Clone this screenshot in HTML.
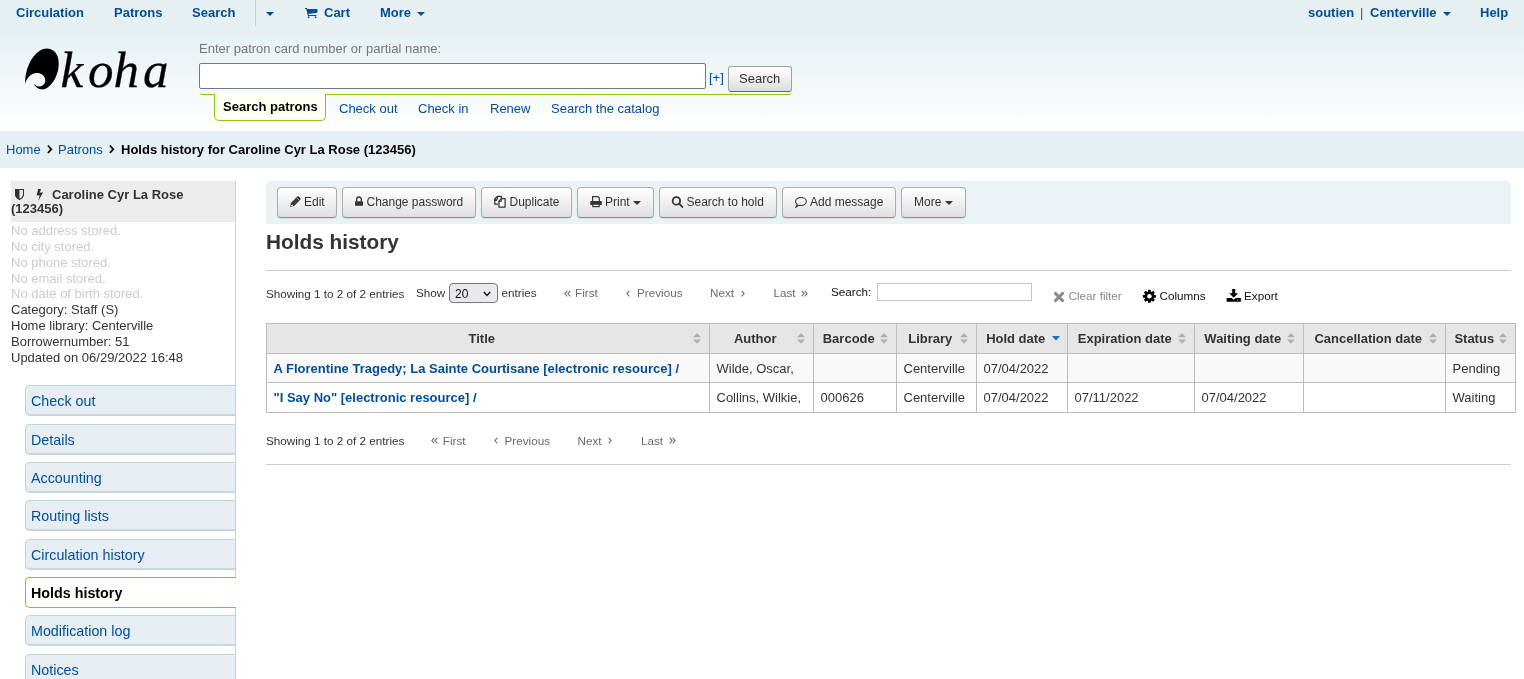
<!DOCTYPE html>
<html><head><meta charset="utf-8">
<style>
*{box-sizing:border-box;margin:0;padding:0}
html,body{width:1524px;height:679px;overflow:hidden;background:#fff}
body{font-family:"Liberation Sans",sans-serif;font-size:13px;color:#333;position:relative;will-change:transform}
.a{position:absolute;white-space:nowrap}
.lnk{color:#004d99}
#nav{position:absolute;left:0;top:0;width:1524px;height:31px;background:#e6f0f2}
#hdr{position:absolute;left:0;top:31px;width:1524px;height:100px;background:linear-gradient(to bottom,#e6f0f2 0%,#ffffff 100%)}
#bc{position:absolute;left:0;top:131px;width:1524px;height:37px;background:#e6f0f2}
.nb{font-weight:bold;color:#004d99;font-size:13px}
.btn{position:absolute;top:187px;height:31px;border:1px solid #adadad;border-bottom-color:#8c8c8c;border-radius:4px;background:linear-gradient(to bottom,#ffffff 0%,#e0e0e0 100%);box-shadow:0 1px 1px rgba(0,0,0,.08)}
.bt{position:absolute;font-size:12px;color:#333;top:195px;line-height:14px}
.menu{position:absolute;left:25px;width:210px;height:31px;background:#e6eef4;border:1px solid #b9d8d9;border-right:0;border-radius:5px 0 0 5px;box-shadow:inset 0 -1px 0 #d2d6d8}
.menu.act{background:#fff;border-color:#85ca11;width:211px;box-shadow:none}
.mt{position:absolute;left:31px;font-size:14.3px;color:#004d99;line-height:16px}
.pg{position:absolute;font-size:11.7px;color:#6b6b6b;line-height:14px}
.th{position:absolute;font-weight:bold;font-size:13px;color:#333;line-height:15px;top:331px}
.td{position:absolute;font-size:13px;color:#333;line-height:15px}
.vl{position:absolute;width:1px;background:#bcbcbc}
.hl{position:absolute;height:1px;background:#bcbcbc}
.sort{position:absolute;top:333px;width:8px;height:11px}
</style></head><body>

<div id="nav"></div>
<div id="hdr"></div>
<div id="bc"></div>

<!-- top nav -->
<div class="a nb" style="left:16px;top:5px;line-height:15px">Circulation</div>
<div class="a nb" style="left:114px;top:5px;line-height:15px">Patrons</div>
<div class="a nb" style="left:192px;top:5px;line-height:15px">Search</div>
<div class="a" style="left:255px;top:0;width:1px;height:26px;background:#b9d8d9"></div>
<svg class="a" style="left:266.2px;top:12px" width="8" height="4" viewBox="0 0 8 4"><path d="M0 0h8L4 4z" fill="#004d99"/></svg>
<svg class="a" style="left:304.7px;top:7.9px" width="13" height="11" viewBox="0 0 13 11"><path d="M0 0.1H1.9L2.4 1H12.4V4.8L3.5 5.9L3.7 7.1H11.4V8.1H2.9L1.3 1.1H0Z" fill="#004d99"/><rect x="2.8" y="8.5" width="1.6" height="1.6" fill="#004d99"/><rect x="9.8" y="8.5" width="1.6" height="1.6" fill="#004d99"/></svg>
<div class="a nb" style="left:324px;top:5px;line-height:15px">Cart</div>
<div class="a nb" style="left:380px;top:5px;line-height:15px">More</div>
<svg class="a" style="left:417.2px;top:12px" width="8" height="4" viewBox="0 0 8 4"><path d="M0 0h8L4 4z" fill="#004d99"/></svg>

<div class="a nb" style="left:1308px;top:5px;line-height:15px">soutien</div>
<div class="a" style="left:1360px;top:5px;line-height:15px;color:#555;font-size:13px">|</div>
<div class="a nb" style="left:1370px;top:5px;line-height:15px">Centerville</div>
<svg class="a" style="left:1443.1px;top:12px" width="8" height="4" viewBox="0 0 8 4"><path d="M0 0h8L4 4z" fill="#004d99"/></svg>
<div class="a nb" style="left:1480px;top:5px;line-height:15px">Help</div>


<!-- logo -->
<svg class="a" style="left:20px;top:44px" width="44" height="50" viewBox="20 44 44 50"><path d="M25.2 84.1C24.5 72 30 57 40 50.5C46 46.5 55 48 57.8 57C60 65 58 75 53 82C49.5 87 45 90 41 89.3C37.5 88.8 34.5 86.5 34.3 84.1C36 86.3 38.5 86.8 40.5 86.3C44 85.5 45.8 82.5 45.2 79.5C44.5 75 40.5 72.8 36.5 73.1C31 73.5 26.5 78 25.2 84.1Z" fill="#000"/></svg>
<div class="a" style="left:0;top:0;font-family:'Liberation Serif',serif;font-style:italic;font-size:51px;line-height:60px;color:#000;-webkit-text-stroke:0.25px #000">
<span class="a" style="left:60.5px;top:40px">k</span><span class="a" style="left:88px;top:40px">o</span><span class="a" style="left:113.5px;top:40px">h</span><span class="a" style="left:143px;top:40px">a</span></div>

<!-- header search -->
<div class="a" style="left:199px;top:41px;font-size:13px;line-height:15px;color:#777">Enter patron card number or partial name:</div>
<div class="a" style="left:199px;top:63px;width:507px;height:26px;border:1px solid #767685;border-radius:2px;background:#fff"></div>
<div class="a lnk" style="left:709px;top:70px;font-size:13px;line-height:15px">[+]</div>
<div class="a" style="left:728px;top:66px;width:64px;height:26px;border:1px solid #a0a0a0;border-bottom-color:#666;border-radius:3px;background:linear-gradient(to bottom,#fff 0%,#ddd 100%)"></div>
<div class="a" style="left:739px;top:71px;font-size:13px;line-height:15px;color:#333">Search</div>
<div class="a" style="left:199px;top:82px;width:593px;height:13px;border:1px solid #85ca11;border-top:0;border-radius:0 0 4px 4px;border-left-color:transparent;border-right-color:transparent"></div>
<div class="a" style="left:214px;top:94px;width:112px;height:27px;background:#fffff3;border:1px solid #85ca11;border-top:0;border-radius:0 0 5px 5px"></div>
<div class="a" style="left:223px;top:99px;font-size:13px;line-height:15px;font-weight:bold;color:#000">Search patrons</div>
<div class="a lnk" style="left:339px;top:101px;font-size:13px;line-height:15px">Check out</div>
<div class="a lnk" style="left:418px;top:101px;font-size:13px;line-height:15px">Check in</div>
<div class="a lnk" style="left:490px;top:101px;font-size:13px;line-height:15px">Renew</div>
<div class="a lnk" style="left:551px;top:101px;font-size:13px;line-height:15px">Search the catalog</div>

<!-- breadcrumbs -->
<div class="a lnk" style="left:6px;top:142px;font-size:13px;line-height:15px">Home</div>
<svg class="a" style="left:47.2px;top:144.8px" width="6" height="9" viewBox="0 0 6 9"><path d="M0.2 1.1L1.6 0L5.4 4.3L1.6 8.6L0.2 7.5L3.1 4.3Z" fill="#000"/></svg>
<div class="a lnk" style="left:58px;top:142px;font-size:13px;line-height:15px">Patrons</div>
<svg class="a" style="left:109.2px;top:144.8px" width="6" height="9" viewBox="0 0 6 9"><path d="M0.2 1.1L1.6 0L5.4 4.3L1.6 8.6L0.2 7.5L3.1 4.3Z" fill="#000"/></svg>
<div class="a" style="left:121px;top:142px;font-size:13px;line-height:15px;font-weight:bold;color:#000">Holds history for Caroline Cyr La Rose (123456)</div>


<!-- sidebar -->
<div class="a" style="left:235px;top:181px;width:1px;height:498px;background:#b9d8d9"></div>
<div class="a" style="left:11px;top:181px;width:224px;height:41px;background:#ececec"></div>
<svg class="a" style="left:15px;top:189px" width="9" height="11" viewBox="0 0 9 11"><path d="M0.5 0.5h8v5c0 2.5-2 4-4 5c-2-1-4-2.5-4-5z" fill="none" stroke="#333" stroke-width="1.2"/><path d="M0.5 0.5h4v10c-2-1-4-2.5-4-5z" fill="#333"/></svg>
<svg class="a" style="left:34px;top:187px" width="12" height="16" viewBox="34 187 12 16"><path d="M38.2 188.9L41.1 188.9L39.6 192.7L43.1 192.2L38.3 200.9L39.7 195.3L36.6 195.5Z" fill="#2a2a2a"/></svg>
<div class="a" style="left:52px;top:188px;font-size:13px;line-height:14.3px;font-weight:bold;color:#333">Caroline Cyr La Rose</div>
<div class="a" style="left:11px;top:201.6px;font-size:13px;line-height:14.3px;font-weight:bold;color:#333">(123456)</div>
<div class="a" style="left:11px;top:223px;font-size:13px;line-height:15.84px;color:#333">
<div style="color:#ccc">No address stored.</div>
<div style="color:#ccc">No city stored.</div>
<div style="color:#ccc">No phone stored.</div>
<div style="color:#ccc">No email stored.</div>
<div style="color:#ccc">No date of birth stored.</div>
<div>Category: Staff (S)</div>
<div>Home library: Centerville</div>
<div>Borrowernumber: 51</div>
<div>Updated on 06/29/2022 16:48</div>
</div>

<div class="menu" style="top:385px"></div><div class="mt" style="top:392.8px">Check out</div>
<div class="menu" style="top:424px"></div><div class="mt" style="top:431.8px">Details</div>
<div class="menu" style="top:462px"></div><div class="mt" style="top:469.8px">Accounting</div>
<div class="menu" style="top:500px"></div><div class="mt" style="top:507.8px">Routing lists</div>
<div class="menu" style="top:539px"></div><div class="mt" style="top:546.8px">Circulation history</div>
<div class="menu act" style="top:577px"></div><div class="mt" style="top:584.8px;color:#000;font-weight:bold">Holds history</div>
<div class="menu" style="top:615px"></div><div class="mt" style="top:622.8px">Modification log</div>
<div class="menu" style="top:654px"></div><div class="mt" style="top:661.8px">Notices</div>


<!-- toolbar -->
<div class="a" style="left:266px;top:181px;width:1245px;height:43px;background:#eaf2f4;border-radius:5px 5px 0 0"></div>
<div class="btn" style="left:277px;width:60px"></div>
<svg class="a" style="left:286px;top:192px" width="20" height="18" viewBox="0 0 20 18"><g transform="translate(4.2 14.7) rotate(-45)"><path d="M0 0 L3.2 -2.2 H12.2 a1 1 0 0 1 1 1 V1.2 a1 1 0 0 1 -1 1 H3.2 Z" fill="#333"/><path d="M11 -2.2 V2.2" stroke="#bbb" stroke-width="0.8"/><path d="M1.4 -0.2 L3 0.9" stroke="#fff" stroke-width="0.9"/><path d="M4 -1 H10" stroke="#666" stroke-width="0.5"/><path d="M4 1 H10" stroke="#666" stroke-width="0.5"/></g></svg>
<div class="bt" style="left:304px">Edit</div>
<div class="btn" style="left:342px;width:134px"></div>
<svg class="a" style="left:350px;top:192px" width="18" height="18" viewBox="0 0 18 18"><path d="M6.7 9.4V7.3a2.3 2.3 0 0 1 4.6 0v2.1" fill="none" stroke="#333" stroke-width="1.3"/><rect x="5" y="9.2" width="8" height="4.6" rx="0.4" fill="#333"/></svg>
<div class="bt" style="left:366.5px">Change password</div>
<div class="btn" style="left:481px;width:91px"></div>
<svg class="a" style="left:488px;top:190px" width="20" height="20" viewBox="0 0 20 20"><path d="M9 10.3H6.8V9.3L6.8 9L9.5 6.3H13.3V8.5" fill="none" stroke="#333" stroke-width="1.25" stroke-linejoin="round"/><path d="M6.8 9.2V14h3.2" fill="none" stroke="#333" stroke-width="1.25"/><path d="M9.5 6.3V9.3H6.8" fill="none" stroke="#333" stroke-width="0.9"/><path d="M13.6 8.6L10.9 11.2V17.1H17.1V8.6Z" fill="#fff" stroke="#333" stroke-width="1.25" stroke-linejoin="round"/><path d="M13.6 8.6V11.4H10.9" fill="none" stroke="#333" stroke-width="0.9"/></svg>
<div class="bt" style="left:509.5px">Duplicate</div>
<div class="btn" style="left:577px;width:77px"></div>
<svg class="a" style="left:585px;top:190px" width="20" height="20" viewBox="0 0 20 20"><path d="M7.6 11.2V6.7h5.4l1.3 1.3v3.2" fill="none" stroke="#333" stroke-width="1.2"/><path d="M5.3 11.7a0.6 0.6 0 0 1 0.6-0.6h10.3a0.6 0.6 0 0 1 0.6 0.6V15H5.3z" fill="#333"/><rect x="7.8" y="14.2" width="6.4" height="2.4" fill="#fff" stroke="#333" stroke-width="1.2"/></svg>
<div class="bt" style="left:605px">Print</div>
<svg class="a" style="left:633px;top:201px" width="8" height="4" viewBox="0 0 8 4"><path d="M0 0h8L4 4z" fill="#333"/></svg>
<div class="btn" style="left:659px;width:118px"></div>
<svg class="a" style="left:666px;top:190px" width="20" height="20" viewBox="0 0 20 20"><circle cx="10.4" cy="10.9" r="3.75" fill="none" stroke="#333" stroke-width="1.8"/><path d="M13.1 13.6l3.3 3.3" stroke="#333" stroke-width="1.9" stroke-linecap="round"/></svg>
<div class="bt" style="left:686.5px">Search to hold</div>
<div class="btn" style="left:782px;width:114px"></div>
<svg class="a" style="left:790px;top:190px" width="20" height="20" viewBox="0 0 20 20"><path d="M10.9 7.5c-3 0-5.4 1.8-5.4 4c0 1.1 0.6 2.1 1.7 2.8L5.8 17.4L8.9 15.3c0.6 0.1 1.3 0.2 2 0.2c3 0 5.4-1.8 5.4-4S13.9 7.5 10.9 7.5z" fill="none" stroke="#333" stroke-width="1.05" stroke-linejoin="round"/></svg>
<div class="bt" style="left:810px">Add message</div>
<div class="btn" style="left:901px;width:65px"></div>
<div class="bt" style="left:914px">More</div>
<svg class="a" style="left:945px;top:201px" width="8" height="4" viewBox="0 0 8 4"><path d="M0 0h8L4 4z" fill="#333"/></svg>

<!-- heading -->
<div class="a" style="left:266px;top:230px;font-size:20.8px;line-height:24px;font-weight:bold;color:#333">Holds history</div>
<div class="a" style="left:266px;top:270px;width:1245px;height:1px;background:#ccc"></div>

<!-- controls top -->
<div class="pg" style="left:266px;top:287px;color:#333">Showing 1 to 2 of 2 entries</div>
<div class="pg" style="left:416px;top:286px;color:#333">Show</div>
<div class="a" style="left:449px;top:283px;width:49px;height:20px;border:1px solid #767685;border-radius:4px;background:#e9e9ed"></div>
<div class="pg" style="left:455px;top:287px;color:#111;font-size:12px">20</div>
<svg class="a" style="left:483px;top:290.5px" width="8" height="6" viewBox="0 0 8 6"><path d="M0.8 1l3.2 3.4L7.2 1" fill="none" stroke="#111" stroke-width="1.4"/></svg>
<div class="pg" style="left:501.5px;top:286px;color:#333">entries</div>
<svg class="a" style="left:563.5px;top:290px" width="7" height="8" viewBox="0 0 7 8"><path d="M3.3 0.9L0.9 3.6l2.4 2.7M6.3 0.9L3.9 3.6l2.4 2.7" fill="none" stroke="#6a6a6a" stroke-width="1.05"/></svg>
<div class="pg" style="left:575px;top:286px">First</div>
<svg class="a" style="left:626px;top:290px" width="4" height="8" viewBox="0 0 4 8"><path d="M3.3 0.9L0.9 3.6l2.4 2.7" fill="none" stroke="#6a6a6a" stroke-width="1.05"/></svg>
<div class="pg" style="left:637px;top:286px">Previous</div>
<div class="pg" style="left:710px;top:286px">Next</div>
<svg class="a" style="left:740.5px;top:290px" width="4" height="8" viewBox="0 0 4 8"><path d="M0.7 0.9L3.1 3.6L0.7 6.3" fill="none" stroke="#6a6a6a" stroke-width="1.05"/></svg>
<div class="pg" style="left:773.5px;top:286px">Last</div>
<svg class="a" style="left:801px;top:290px" width="7" height="8" viewBox="0 0 7 8"><path d="M0.7 0.9L3.1 3.6L0.7 6.3M3.7 0.9L6.1 3.6L3.7 6.3" fill="none" stroke="#6a6a6a" stroke-width="1.05"/></svg>
<div class="pg" style="left:831px;top:285px;color:#111">Search:</div>
<div class="a" style="left:877px;top:283px;width:155px;height:18px;border:1px solid #c4c4c4;background:#fff"></div>
<svg class="a" style="left:1053px;top:291px" width="12" height="12" viewBox="0 0 12 12"><path d="M2.4 2.4L9.6 9.6M9.6 2.4L2.4 9.6" stroke="#8a8a8a" stroke-width="2.9" stroke-linecap="round"/></svg>
<div class="pg" style="left:1068.5px;top:289px;color:#8a8a8a">Clear filter</div>
<svg class="a" style="left:1140px;top:286px" width="20" height="20" viewBox="0 0 20 20"><g transform="translate(9.4 10.3)" fill="#000"><circle r="4.9"/><rect x="-1.35" y="-6.5" width="2.7" height="13" rx="0.5" transform="rotate(0)"/><rect x="-1.35" y="-6.5" width="2.7" height="13" rx="0.5" transform="rotate(45)"/><rect x="-1.35" y="-6.5" width="2.7" height="13" rx="0.5" transform="rotate(90)"/><rect x="-1.35" y="-6.5" width="2.7" height="13" rx="0.5" transform="rotate(135)"/><circle r="2.3" fill="#fff"/></g></svg>
<div class="pg" style="left:1159.5px;top:289px;color:#111">Columns</div>
<svg class="a" style="left:1222px;top:285px" width="24" height="20" viewBox="0 0 24 20"><path d="M10.2 4H13.25V8.3H16.1L11.7 12.8L7.3 8.3H10.2Z" fill="#000"/><path d="M5.1 12.95H9.6L11.7 14.8L13.8 12.95H18.35Q18.85 12.95 18.85 13.45V16.3Q18.85 16.8 18.35 16.8H5.1Q4.6 16.8 4.6 16.3V13.45Q4.6 12.95 5.1 12.95Z" fill="#000"/><rect x="14.8" y="14.7" width="1.3" height="0.8" rx="0.4" fill="#bbb"/><rect x="16.6" y="14.7" width="0.9" height="0.8" rx="0.4" fill="#bbb"/></svg>
<div class="pg" style="left:1244px;top:289px;color:#111">Export</div>

<!-- table -->
<div class="a" style="left:266px;top:323px;width:1250px;height:30px;background:#e6e6e6"></div>
<div class="a" style="left:266px;top:353px;width:1250px;height:29px;background:#f9f9f9"></div>
<div class="hl" style="left:266px;top:323px;width:1250px"></div>
<div class="hl" style="left:266px;top:353px;width:1250px"></div>
<div class="hl" style="left:266px;top:382px;width:1250px"></div>
<div class="hl" style="left:266px;top:412px;width:1250px"></div>
<div class="vl" style="left:266px;top:323px;height:90px"></div>
<div class="vl" style="left:709px;top:323px;height:90px"></div>
<div class="vl" style="left:813px;top:323px;height:90px"></div>
<div class="vl" style="left:896px;top:323px;height:90px"></div>
<div class="vl" style="left:976px;top:323px;height:90px"></div>
<div class="vl" style="left:1067px;top:323px;height:90px"></div>
<div class="vl" style="left:1194px;top:323px;height:90px"></div>
<div class="vl" style="left:1303px;top:323px;height:90px"></div>
<div class="vl" style="left:1445px;top:323px;height:90px"></div>
<div class="vl" style="left:1515px;top:323px;height:90px"></div>
<div class="th" style="left:267px;width:442px;text-align:center;padding:0 19px 0 6.5px">Title</div>
<svg class="sort" style="left:693px" width="8" height="11" viewBox="0 0 8 11"><path d="M4 0L8 4.3H0z M0 6.4h8L4 10.7z" fill="#b0b0b0"/></svg>
<div class="th" style="left:710px;width:103px;text-align:center;padding:0 19px 0 6.5px">Author</div>
<svg class="sort" style="left:797px" width="8" height="11" viewBox="0 0 8 11"><path d="M4 0L8 4.3H0z M0 6.4h8L4 10.7z" fill="#b0b0b0"/></svg>
<div class="th" style="left:814px;width:82px;text-align:center;padding:0 19px 0 6.5px">Barcode</div>
<svg class="sort" style="left:880px" width="8" height="11" viewBox="0 0 8 11"><path d="M4 0L8 4.3H0z M0 6.4h8L4 10.7z" fill="#b0b0b0"/></svg>
<div class="th" style="left:897px;width:79px;text-align:center;padding:0 19px 0 6.5px">Library</div>
<svg class="sort" style="left:960px" width="8" height="11" viewBox="0 0 8 11"><path d="M4 0L8 4.3H0z M0 6.4h8L4 10.7z" fill="#b0b0b0"/></svg>
<div class="th" style="left:977px;width:90px;text-align:center;padding:0 19px 0 6.5px">Hold date</div>
<svg class="sort" style="left:1051.5px;top:336px;height:5px" width="8" height="5" viewBox="0 0 8 5"><path d="M0 0h8L4 4.6z" fill="#0a6ed1"/></svg>
<div class="th" style="left:1068px;width:126px;text-align:center;padding:0 19px 0 6.5px">Expiration date</div>
<svg class="sort" style="left:1178px" width="8" height="11" viewBox="0 0 8 11"><path d="M4 0L8 4.3H0z M0 6.4h8L4 10.7z" fill="#b0b0b0"/></svg>
<div class="th" style="left:1195px;width:108px;text-align:center;padding:0 19px 0 6.5px">Waiting date</div>
<svg class="sort" style="left:1287px" width="8" height="11" viewBox="0 0 8 11"><path d="M4 0L8 4.3H0z M0 6.4h8L4 10.7z" fill="#b0b0b0"/></svg>
<div class="th" style="left:1304px;width:141px;text-align:center;padding:0 19px 0 6.5px">Cancellation date</div>
<svg class="sort" style="left:1429px" width="8" height="11" viewBox="0 0 8 11"><path d="M4 0L8 4.3H0z M0 6.4h8L4 10.7z" fill="#b0b0b0"/></svg>
<div class="th" style="left:1446px;width:69px;text-align:center;padding:0 19px 0 6.5px">Status</div>
<svg class="sort" style="left:1499px" width="8" height="11" viewBox="0 0 8 11"><path d="M4 0L8 4.3H0z M0 6.4h8L4 10.7z" fill="#b0b0b0"/></svg>
<div class="td" style="left:273.5px;top:361px"><b style="color:#004d99">A Florentine Tragedy; La Sainte Courtisane [electronic resource] /</b></div>
<div class="td" style="left:716.5px;top:361px">Wilde, Oscar,</div>
<div class="td" style="left:903.5px;top:361px">Centerville</div>
<div class="td" style="left:983.5px;top:361px">07/04/2022</div>
<div class="td" style="left:1452.5px;top:361px">Pending</div>
<div class="td" style="left:273.5px;top:390px"><b style="color:#004d99">"I Say No" [electronic resource] /</b></div>
<div class="td" style="left:716.5px;top:390px">Collins, Wilkie,</div>
<div class="td" style="left:820.5px;top:390px">000626</div>
<div class="td" style="left:903.5px;top:390px">Centerville</div>
<div class="td" style="left:983.5px;top:390px">07/04/2022</div>
<div class="td" style="left:1074.5px;top:390px">07/11/2022</div>
<div class="td" style="left:1201.5px;top:390px">07/04/2022</div>
<div class="td" style="left:1452.5px;top:390px">Waiting</div>

<!-- controls bottom -->
<div class="pg" style="left:266px;top:434px;color:#333">Showing 1 to 2 of 2 entries</div>
<svg class="a" style="left:431px;top:437px" width="7" height="8" viewBox="0 0 7 8"><path d="M3.3 0.9L0.9 3.6l2.4 2.7M6.3 0.9L3.9 3.6l2.4 2.7" fill="none" stroke="#6a6a6a" stroke-width="1.05"/></svg>
<div class="pg" style="left:442.8px;top:434px">First</div>
<svg class="a" style="left:494px;top:437px" width="4" height="8" viewBox="0 0 4 8"><path d="M3.3 0.9L0.9 3.6l2.4 2.7" fill="none" stroke="#6a6a6a" stroke-width="1.05"/></svg>
<div class="pg" style="left:504.5px;top:434px">Previous</div>
<div class="pg" style="left:577.5px;top:434px">Next</div>
<svg class="a" style="left:608px;top:437px" width="4" height="8" viewBox="0 0 4 8"><path d="M0.7 0.9L3.1 3.6L0.7 6.3" fill="none" stroke="#6a6a6a" stroke-width="1.05"/></svg>
<div class="pg" style="left:641px;top:434px">Last</div>
<svg class="a" style="left:668.5px;top:437px" width="7" height="8" viewBox="0 0 7 8"><path d="M0.7 0.9L3.1 3.6L0.7 6.3M3.7 0.9L6.1 3.6L3.7 6.3" fill="none" stroke="#6a6a6a" stroke-width="1.05"/></svg>
<div class="a" style="left:266px;top:464px;width:1245px;height:1px;background:#ccc"></div>

</body></html>
